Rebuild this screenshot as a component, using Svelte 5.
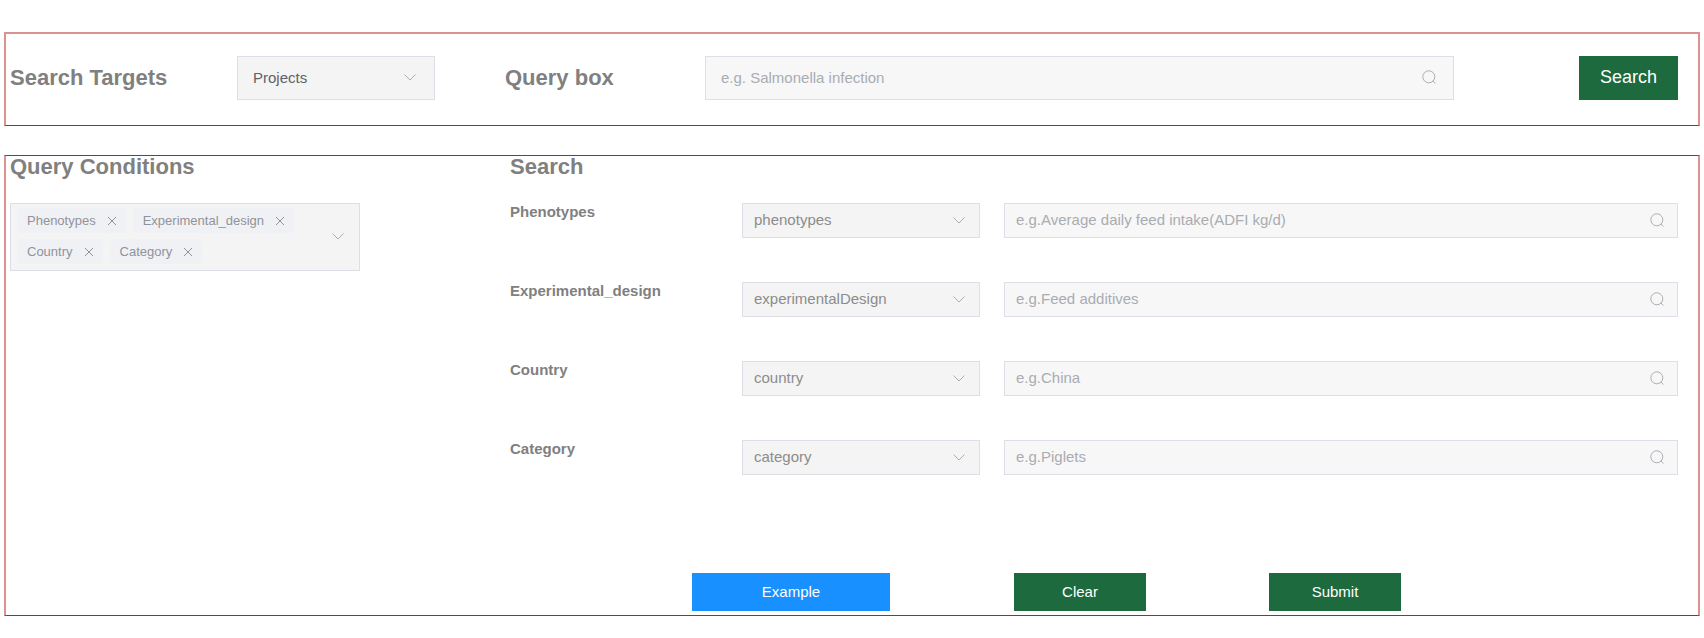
<script>
  let target = $state('Projects');
  let query = $state('');
  let conditions = $state([
    { label: 'Phenotypes', field: 'phenotypes', hint: 'e.g.Average daily feed intake(ADFI kg/d)', value: '' },
    { label: 'Experimental_design', field: 'experimentalDesign', hint: 'e.g.Feed additives', value: '' },
    { label: 'Country', field: 'country', hint: 'e.g.China', value: '' },
    { label: 'Category', field: 'category', hint: 'e.g.Piglets', value: '' },
  ]);

  function remove(label) {
    conditions = conditions.filter((c) => c.label !== label);
  }
  function clear() {
    for (const c of conditions) c.value = '';
  }
  function example() {
    for (const c of conditions) c.value = c.hint.slice(4);
  }
</script>

{#snippet chevron()}
  <svg class="icon" width="14" height="14" viewBox="0 0 14 14" aria-hidden="true">
    <path d="M1.5 4.5 L7 10 L12.5 4.5" />
  </svg>
{/snippet}

{#snippet magnifier()}
  <svg class="icon" width="14" height="14" viewBox="0 0 14 14" aria-hidden="true">
    <circle cx="6.8" cy="6.8" r="6" />
    <path d="M10.9 10.9 L13.4 13.6" />
  </svg>
{/snippet}

<main>
  <form class="panel targets" onsubmit={(e) => e.preventDefault()}>
    <label class="title" for="target">Search Targets</label>
    <div class="field large">
      <select id="target" bind:value={target}>
        <option>Projects</option>
      </select>
      {@render chevron()}
    </div>
    <label class="title query-label" for="query">Query box</label>
    <div class="field large">
      <input id="query" type="text" placeholder="e.g. Salmonella infection" bind:value={query} />
      {@render magnifier()}
    </div>
    <button class="btn search" type="submit">Search</button>
  </form>

  <section class="panel builder">
    <div>
      <h2 class="title">Query Conditions</h2>
      <div class="field multi">
        {#each conditions as c (c.label)}
          <span class="tag">
            {c.label}
            <button type="button" aria-label="Remove {c.label}" onclick={() => remove(c.label)}>
              <svg width="10" height="10" viewBox="0 0 10 10" aria-hidden="true">
                <path d="M1 1 L9 9 M9 1 L1 9" />
              </svg>
            </button>
          </span>
        {/each}
        {@render chevron()}
      </div>
    </div>

    <form onsubmit={(e) => e.preventDefault()}>
      <h2 class="title">Search</h2>
      <div class="rows">
        {#each conditions as c (c.label)}
          <div class="row">
            <label for="value-{c.field}">{c.label}</label>
            <div class="field">
              <select aria-label="{c.label} field">
                <option>{c.field}</option>
              </select>
              {@render chevron()}
            </div>
            <div class="field value">
              <input id="value-{c.field}" type="text" placeholder={c.hint} bind:value={c.value} />
              {@render magnifier()}
            </div>
          </div>
        {/each}
      </div>
      <div class="actions">
        <button class="btn example" type="button" onclick={example}>Example</button>
        <button class="btn clear" type="button" onclick={clear}>Clear</button>
        <button class="btn submit" type="submit">Submit</button>
      </div>
    </form>
  </section>
</main>

<style>
  :global(body) {
    background: #fff;
  }
  main {
    padding: 32px 4px 22px;
    display: flex;
    flex-direction: column;
    gap: 29px;
    font-family: "Liberation Sans", Arial, sans-serif;
    font-size: 15px;
    color: #808080;
  }
  .panel {
    box-sizing: border-box;
    border: solid #db9292;
    border-width: 1px 2px;
    border-top-color: #ac2626;
    border-bottom-color: #ac2626;
    padding: 0 20px 0 4px;
    display: grid;
  }
  .targets {
    border-top: 2px solid #db9292;
    padding-top: 22px;
    padding-bottom: 25px;
    grid-template-columns: 227fr 198fr 70fr 200fr 749fr 125fr 99fr;
    align-items: center;
  }
  .query-label {
    grid-column: 4;
  }
  .search {
    grid-column: 7;
  }
  .builder {
    grid-template-columns: 350fr 1168fr;
    column-gap: 150px;
  }
  .title {
    margin: 0;
    font-size: 22px;
    line-height: 22px;
    font-weight: bold;
    white-space: nowrap;
  }
  h2.title {
    margin-bottom: 25px;
  }

  .field {
    position: relative;
    min-width: 0;
    height: 35px;
  }
  .field.large {
    height: 44px;
  }
  select,
  input {
    appearance: none;
    box-sizing: border-box;
    display: block;
    width: 100%;
    height: 100%;
    margin: 0;
    padding: 0 36px 2px 11px;
    border: 1px solid #dcdfe6;
    border-radius: 0;
    outline: none;
    font: inherit;
  }
  select {
    background: #f4f4f4;
    color: #8c8c8c;
  }
  input {
    background: #f7f7f7;
    color: #606266;
  }
  input::placeholder {
    color: #a9acb2;
    opacity: 1;
  }
  .large select,
  .large input {
    padding-left: 15px;
  }
  .large select {
    color: #606266;
  }
  .icon {
    position: absolute;
    right: 14px;
    top: 50%;
    margin-top: -8px;
    fill: none;
    stroke: #acaeb3;
    pointer-events: none;
  }
  .large .icon {
    right: 18px;
  }

  .field.multi {
    box-sizing: border-box;
    height: auto;
    min-height: 35px;
    display: flex;
    flex-wrap: wrap;
    gap: 6px 7px;
    padding: 4px 46px 6px 6px;
    border: 1px solid #dcdfe6;
    background: #f4f4f4;
  }
  .tag {
    display: flex;
    align-items: center;
    gap: 11px;
    height: 25px;
    padding: 0 9px 0 10px;
    border-radius: 4px;
    background: #f0f1f5;
    color: #909399;
    font-size: 13px;
  }
  .tag button {
    display: flex;
    padding: 0;
    border: 0;
    background: none;
    cursor: pointer;
  }
  .tag path {
    stroke: #909399;
  }

  .rows {
    display: grid;
    row-gap: 44px;
  }
  .row {
    display: grid;
    grid-template-columns: 232fr 238fr 24fr 674fr;
  }
  .row label {
    font-weight: bold;
    line-height: 18px;
  }
  .value {
    grid-column: 4;
  }

  .actions {
    display: grid;
    grid-template-columns: 182fr 198fr 124fr 132fr 123fr 132fr 277fr;
    margin-top: 98px;
    padding-bottom: 4px;
  }
  .btn {
    height: 38px;
    padding: 0 0 2px;
    border: 0;
    background: #1c6a3e;
    color: #fff;
    font: inherit;
    cursor: pointer;
  }
  .btn.search {
    height: 44px;
    font-size: 18px;
  }
  .example {
    grid-column: 2;
    background: #1890ff;
  }
  .clear {
    grid-column: 4;
  }
  .submit {
    grid-column: 6;
  }
</style>
